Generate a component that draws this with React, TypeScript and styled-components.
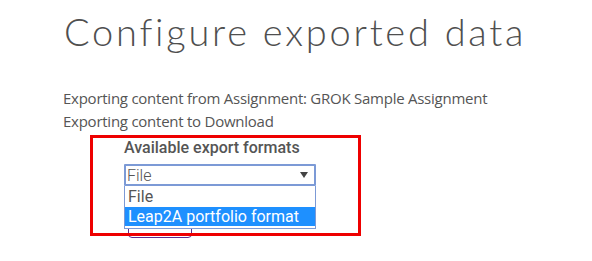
import React from "react";
import styled, { createGlobalStyle } from "styled-components";

const Global = createGlobalStyle`
  html, body { margin: 0; padding: 0; background: #fff; }
  body { width: 592px; height: 261px; overflow: hidden; }
`;

const Page = styled.div`
  position: relative;
  padding: 8px 0 0 63px;
`;

const Title = styled.h1`
  margin: 0 0 0 1px;
  font-family: Lato, "Open Sans", sans-serif;
  font-weight: 300;
  font-size: 38px;
  line-height: 46px;
  letter-spacing: 2.75px;
  color: #4f4f4f;
`;

const Info = styled.p`
  margin: 0;
  font-family: "Open Sans", Lato, sans-serif;
  font-size: 15px;
  line-height: 23px;
  color: #555;
  letter-spacing: -0.25px;
  &:first-of-type { margin-top: 33px; }
`;

const Form = styled.div`
  padding: 5px 0 0 61px;
  position: relative;
`;

const Label = styled.div`
  font-family: Roboto, sans-serif;
  font-weight: 500;
  font-size: 16px;
  line-height: 20px;
  color: #555;
`;

const SelectWrap = styled.div`
  position: relative;
  margin-top: 6px;
  width: 192px;
`;

const SelectBox = styled.div`
  box-sizing: border-box;
  height: 22px;
  border: 2px solid #7c9ad6;
  border-radius: 1px;
  display: flex;
  align-items: center;
  justify-content: space-between;
  padding: 0 6px 0 1px;
  font-family: Roboto, sans-serif;
  font-weight: 300;
  font-size: 16px;
  color: #555;
`;

const Arrow = styled.span`
  width: 0;
  height: 0;
  border-left: 4px solid transparent;
  border-right: 4px solid transparent;
  border-top: 6px solid #444;
`;

const List = styled.div`
  position: absolute;
  left: 0;
  top: 22px;
  width: 192px;
  box-sizing: border-box;
  border: 1px solid #7c9ad6;
  border-top: none;
  background: #fff;
  z-index: 2;
  padding-bottom: 2px;
`;

const Option = styled.div<{ $active?: boolean }>`
  height: ${(p) => (p.$active ? 19 : 21)}px;
  line-height: ${(p) => (p.$active ? 19 : 21)}px;
  padding-left: 3px;
  font-family: Roboto, sans-serif;
  font-size: 16px;
  color: ${(p) => (p.$active ? "#fff" : "#555")};
  background: ${(p) => (p.$active ? "#1e90ff" : "transparent")};
`;

const Button = styled.div`
  margin: 10px 0 0 4px;
  width: 64px;
  height: 42px;
  box-sizing: border-box;
  border: 1px solid #5b2c8f;
  border-radius: 4px;
`;

const Annotation = styled.div`
  position: absolute;
  left: 90px;
  top: 135px;
  width: 271px;
  height: 101px;
  box-sizing: border-box;
  border: 3px solid #ee0000;
  z-index: 3;
  pointer-events: none;
`;

export default function App() {
  return (
    <>
      <Global />
      <Page>
        <Title>Configure exported data</Title>
        <Info>Exporting content from Assignment: GROK Sample Assignment</Info>
        <Info>Exporting content to Download</Info>
        <Form>
          <Label>Available export formats</Label>
          <SelectWrap>
            <SelectBox>
              <span>File</span>
              <Arrow />
            </SelectBox>
            <List>
              <Option>File</Option>
              <Option $active>Leap2A portfolio format</Option>
            </List>
          </SelectWrap>
          <Button />
        </Form>
        <Annotation />
      </Page>
    </>
  );
}
